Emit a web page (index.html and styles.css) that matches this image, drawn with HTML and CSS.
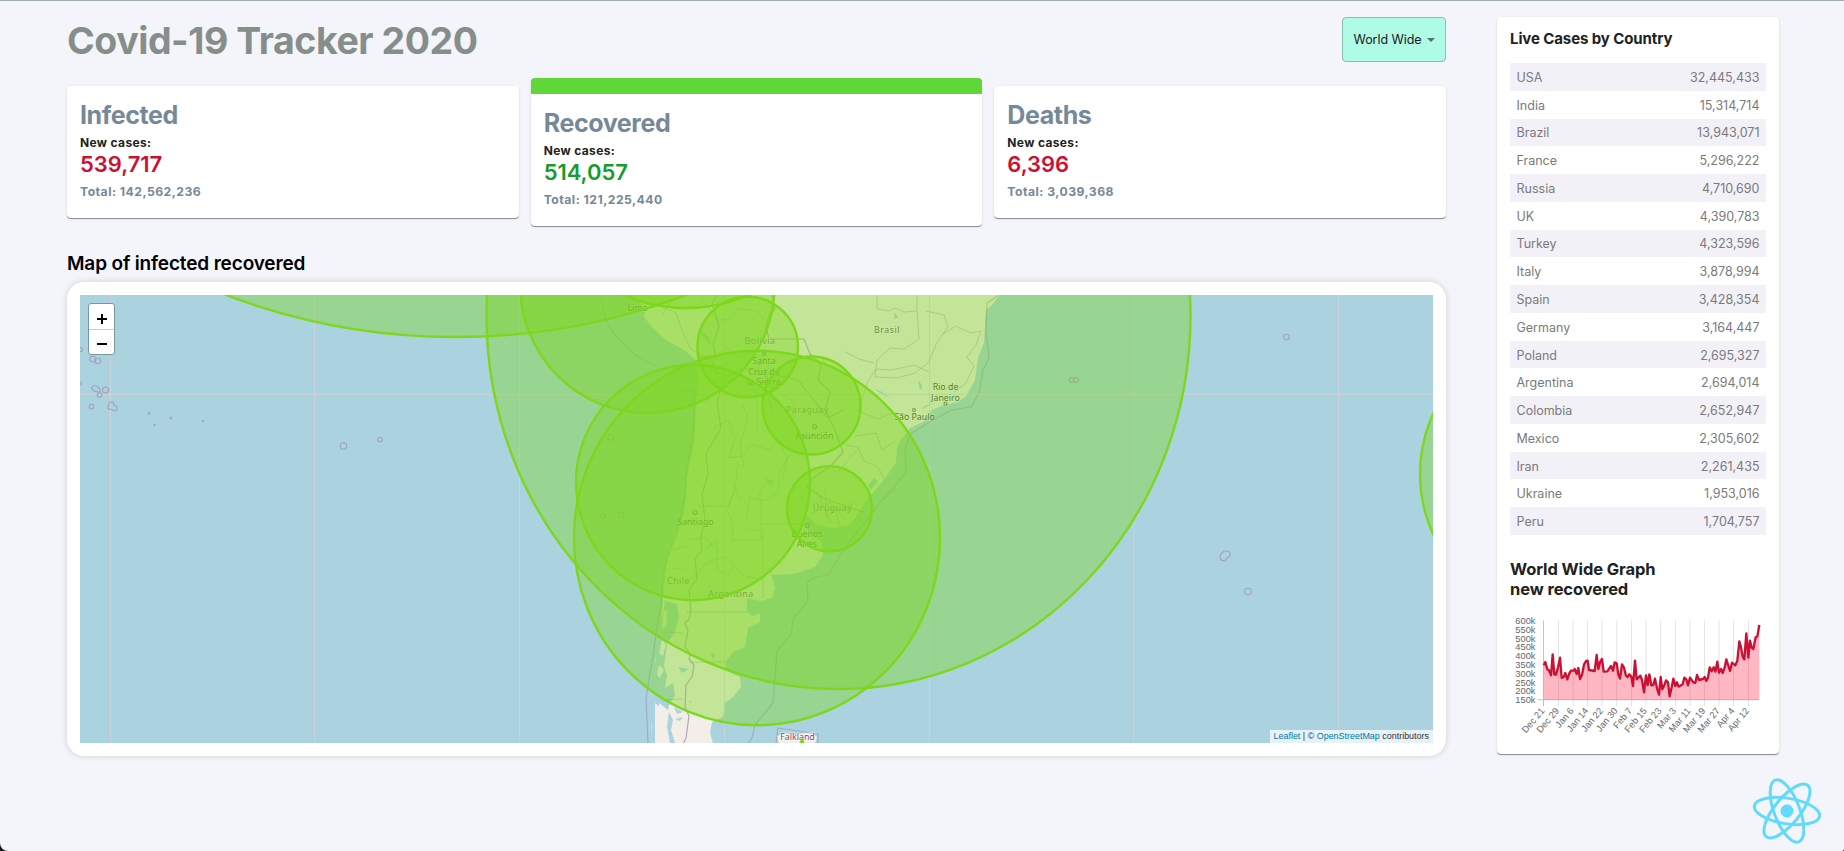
FILE: index.html
```html
<!DOCTYPE html>
<html lang="en">
<head>
<meta charset="utf-8">
<title>Covid-19 Tracker 2020</title>
<link rel="stylesheet" href="styles.css">
</head>
<body>
<div class="app">
  <main class="left">
    <header class="header">
      <h1>Covid-19 Tracker 2020</h1>
      <div class="dropdown"><span>World Wide</span><svg class="caret" width="8" height="4" viewBox="0 0 8 4"><path d="M0 0h8L4 4z"/></svg></div>
    </header>
    <section class="stats">
      <article class="card stat">
        <h2>Infected</h2><h3>New cases:</h3><p class="count red">539,717</p><p class="total">Total: 142,562,236</p>
      </article>
      <article class="card stat selected">
        <h2>Recovered</h2><h3>New cases:</h3><p class="count green">514,057</p><p class="total">Total: 121,225,440</p>
      </article>
      <article class="card stat">
        <h2>Deaths</h2><h3>New cases:</h3><p class="count red">6,396</p><p class="total">Total: 3,039,368</p>
      </article>
    </section>
    <h2 class="map-title"><span>Map of infected recovered</span></h2>
    <section class="map-card">
      <div class="map">
        <svg class="tiles" viewBox="80 295 1353 448" width="1353" height="448">
          <rect class="water" x="80" y="295" width="1353" height="448"/>
          <path class="land" d="M1000 295L990 307 986 310 984 343 978 358 975 380 966 396 958 402 944 405 932 410 923 422 910 428 901 440 897 448 896 462 884 480 869 497 860 510 850 525 833 528 817 525 808 516 803 518 808 530 822 543 823 555 815 567 793 574 773 575 770 570 775 588 772 598 760 601 747 598 747 612 752 616 760 613 760 622 748 628 745 647 733 652 727 660 725 670 740 677 741 687 733 697 725 703 723 717 712 722 710 733 713 743H652L651 694 656 680 655 660 660 645 661 627 663 600 666 567 670 550 677 532 683 517 686 500 687 477 694 443 696 413 698 380 696 360 684 350 666 340 653 328 644 317 645 310 637 300 634 295z"/>
          <!-- fjords, lakes and lagoons -->
          <g class="water">
            <path d="M665 601l12 3 2 14-4 14-8 12-3 22 3 10-2 12 8-5 2 12-8 14-8-6-1 18-8 2-4-8 6-24 2-20 5-32z"/>
            <path d="M652 700l5 10 2 18 2 15h-9zM669 712l4 8-2 10 4 13h-5l-3-16zM674 707l9 5-6 2zM675 719l8-2-3 4zM660 696l10 6-2 8-5-4z"/>
            <path d="M701 330l6 5 5 9-4-1-6-7zM767 479l7 2-2 4-5-1zM874 478l4 3-7 9-3-4zM718 540l-8 7-5 3 5-6zM710 652l5 3-2 4zM678 667l11 2-7 4zM689 700l3 3-2 0zM873 388l9 4 8 6-5-2zM918 380l4 5 0 5-3-3zM895 312l3 6-4 1zM935 402l-10 4-4 4z"/>
          </g>
          <g class="land-islet"><path d="M664 610l3 2-1 14-4 3zM662 640l4 4-3 12-4-3zM659 665l5 5-4 8-3-3zM655 703l7 6 2 12-4 6 4 16h-9zM777 736l8-3 10 2 16-3 6 5-2 6h-36z"/></g>
          <!-- national borders -->
          <g class="border">
            <path d="M772 295l3 14-6 6-3 12 3 12h35l6 15 5 4 6 8-3 14 12 12-5 18 10 20 8 22-12 14-18 12-6 9 16 11 23 8 17 6M698 358l12-2 6 16 12 4 14-8 22 4 8 16 12-4M716 358l-3-14 6-18-7-22 5-9M764 372l34 8 14 18 16 20 15-8M726 372l-9 30 4 26-15 26 2 20-6 20 3 25-4 18 1 13-7 9 2 20-8 11 2 22-2 7-4 4 3 8-3 16 5 7-1 5 5 6-2 12-6 8-1 22 4 9-3 22-3 6 7 7-6 9-4 9 3 12 9 2-2 9 6 9"/>
          </g>
          <!-- territorial waters -->
          <g class="maritime">
            <path d="M999 295l-12 8-1 29 3 26-6 12-4 23-8 14-20 3-18 10-23 14-5 15 1 23-14 18-12 12-20 26-18 24-13 22-18 5-4 4 1 18-15 18-2 16-14 16-2 26-2 26-18 22-3 13-9 12 1 30M648 743l-2-44 3-20 5-28 2-18 5-28 2-32 5-17 9-22 8-40 2-26 7-40 0-36-16-4M776 743l2-15 40 6 0 9M601 295q4 32 18 44 14 18 36 27"/>
          </g>
          <!-- province boundaries -->
          <g class="province">
            <path d="M877 295v14l12 2 6-3 9 4 13-1v-16M917 311l2 28-15 10-14-1-13 12-2 17 22 1 18-5 14-11 8-20 11-15-4-12-18-4M942 335l14-9 15 7 10-2-5 14-9 12 7 9-8 17-12 9M929 372l-15-7-22 5-16-1-8 12-10 30 20 8 14-6 16 2M845 352l14 7 15 4M855 436l21-3 6 17 13-9M859 448l-9 10-12 14M846 445l12 2 6 14 14 6 8 16"/>
            <path d="M646 295l16 12 14 6 7 20 8 16 14 9M672 300l-10 15M702 300l15 20 10 0 12-12 18 3 12 15M722 345l17 12 14-5 16 14M714 428l14-8 7 18-6 20 14-2 9-12 17 6 10-10 8 20-5 20M742 404l6 14-8 26 4 24M760 360l-4 20 12 14 4 18M790 455l-10 15-2 23-14 8-14-4-4 22M738 462l-3 28-8 20 6 14-1 18M700 506h28l6-16M690 540l14-3 10 10M732 540h29v-42M747 530h16v68M717 540v30l12 5 6-13M762 524h42M686 612h61M690 662h39M672 550l14-4M674 568l13 2M687 580l10-4 8-12 20-8 17 19 20 5M812 500l10 8 8-6 14 16M817 492l6 14 8 16M825 490l2 32M809 516l12-8M835 510l5 16M842 508l12-5M664 632l19 1M662 700l20-1M797 405l-12-10M740 500l-8-18M757 500l10-22M757 388v42"/>
          </g>
          <!-- meridians and tropic -->
          <g class="grid"><path d="M110.500 295V743M314.500 295V743M519.500 295V743M724.500 295V743M929.500 295V743M1134 295V743M1338.500 295V743M80 394.500H1433"/></g>
          <g class="islet">
            <circle cx="80.500" cy="349.500" r="2"/><circle cx="92.500" cy="359" r="2.800"/><circle cx="98" cy="361" r="2.800"/>
            <path d="M92 387q3-3 6 0 4 4 1 5-4 0-6-2-2-2-1-3z"/><circle cx="105.500" cy="390" r="3"/><circle cx="99.500" cy="395" r="2.300"/><circle cx="91.500" cy="406.500" r="2.300"/><circle cx="80" cy="383.500" r="1.500"/>
            <path d="M108 406l2-4h3l1 3 3 2v3l-3 1-3-2q-4 1-3-3z"/>
            <circle cx="149" cy="413.500" r=".7"/><circle cx="171" cy="418" r=".9"/><circle cx="154.500" cy="425" r=".6"/><circle cx="203" cy="421" r=".6"/>
            <circle cx="343.500" cy="446" r="3.200"/><circle cx="380" cy="439.500" r="2.300"/>
            <circle cx="610.500" cy="437.500" r="2.800"/><circle cx="603" cy="516" r="2.500"/><circle cx="621" cy="515" r="2.800"/>
            <circle cx="1071.500" cy="380" r="2.400"/><circle cx="1076" cy="380" r="2.400"/><circle cx="1286.500" cy="337" r="2.800"/><circle cx="1248" cy="591.500" r="3.300"/>
            <path d="M1221 554l3-3h3q4 1 3 5l-3 2-2 3-4-1-1-4z"/>
          </g>
          <g class="dots"><circle cx="814.500" cy="426.500" r="2"/><circle cx="695" cy="512.500" r="2"/><circle cx="807" cy="525.500" r="2"/><circle cx="914" cy="410" r="1.500"/><circle cx="945.500" cy="403.500" r="1.500"/><circle cx="764" cy="354" r="1.500"/></g>
          <g class="country">
            <text x="887" y="333">Brasil</text><text x="760" y="344">Bolivia</text><text x="807.500" y="413">Paraguay</text><text x="832.500" y="511">Uruguay</text><text x="678.500" y="584">Chile</text><text x="731" y="597">Argentina</text><text x="797.500" y="739.500" class="falkland">Falkland</text>
          </g>
          <g class="city">
            <text x="637.500" y="311">Lima</text><text x="764" y="364">Santa</text><text x="764" y="374.500">Cruz de</text><text x="764" y="385">la Sierra</text><text x="814.500" y="439">Asunción</text><text x="695.500" y="524.500">Santiago</text><text x="807" y="537">Buenos</text><text x="807" y="547">Aires</text>
            <text x="945.500" y="390">Rio de</text><text x="945.500" y="400.500">Janeiro</text><text x="914.500" y="420">São Paulo</text>
          </g>
          <g class="cases">
            <circle cx="456" cy="-314" r="651"/>
            <ellipse cx="838.500" cy="316" rx="352" ry="373"/>
            <ellipse cx="757" cy="538" rx="183" ry="187.300"/>
            <circle cx="647.500" cy="286" r="127"/>
            <ellipse cx="693" cy="482.500" rx="117" ry="117.700"/>
            <circle cx="686" cy="149" r="159"/>
            <circle cx="747.700" cy="347" r="50.300"/>
            <circle cx="811.500" cy="405.500" r="49"/>
            <circle cx="829.500" cy="508.700" r="42.600"/>
            <circle cx="1565" cy="474" r="145"/>
            <circle cx="802" cy="742" r="1"/>
          </g>
        </svg>
        <div class="zoom">
          <span><svg width="10" height="10" viewBox="0 0 10 10"><path d="M5 0v10M0 5h10"/></svg></span>
          <span><svg width="10" height="10" viewBox="0 0 10 10"><path d="M0 5h10"/></svg></span>
        </div>
        <div class="attribution"><a>Leaflet</a> | © <a>OpenStreetMap</a> contributors</div>
      </div>
    </section>
  </main>
  <aside class="card right">
    <h3 class="list-title">Live Cases by Country</h3>
    <div class="table">
      <div class="row"><span>USA</span><span>32,445,433</span></div>
      <div class="row"><span>India</span><span>15,314,714</span></div>
      <div class="row"><span>Brazil</span><span>13,943,071</span></div>
      <div class="row"><span>France</span><span>5,296,222</span></div>
      <div class="row"><span>Russia</span><span>4,710,690</span></div>
      <div class="row"><span>UK</span><span>4,390,783</span></div>
      <div class="row"><span>Turkey</span><span>4,323,596</span></div>
      <div class="row"><span>Italy</span><span>3,878,994</span></div>
      <div class="row"><span>Spain</span><span>3,428,354</span></div>
      <div class="row"><span>Germany</span><span>3,164,447</span></div>
      <div class="row"><span>Poland</span><span>2,695,327</span></div>
      <div class="row"><span>Argentina</span><span>2,694,014</span></div>
      <div class="row"><span>Colombia</span><span>2,652,947</span></div>
      <div class="row"><span>Mexico</span><span>2,305,602</span></div>
      <div class="row"><span>Iran</span><span>2,261,435</span></div>
      <div class="row"><span>Ukraine</span><span>1,953,016</span></div>
      <div class="row"><span>Peru</span><span>1,704,757</span></div>
    </div>
    <h3 class="graph-title">World Wide Graph<br>new recovered</h3>
    <svg class="chart" viewBox="1510 612 256 130" width="256" height="130">
      <path class="chart-grid" d="M1558.500 620.500V706M1573.100 620.500V706M1587.500 620.500V706M1602 620.500V706M1616.700 620.500V706M1631.500 620.500V706M1646 620.500V706M1660.700 620.500V706M1675.500 620.500V706M1690 620.500V706M1704.500 620.500V706M1719 620.500V706M1733.500 620.500V706M1748.500 620.500V706"/>
      <path class="chart-axis" d="M1543.500 620.500V706M1538 699.700H1759"/>
      <g transform="translate(1530 610) scale(.33333)">
        <path class="area" d="M41 269V166L46 156 52 178 57 181 63 196 68 133 73 194 78 194 84 172 90 143 95 204 101 201 106 189 112 208 118 190 123 182 133 181 134 177 140 192 145 174 150 207 156 195 162 164 168 153 173 152 177 180 194 183 200 135 205 177 211 154 216 147 221 185 232 184 243 168 249 182 254 157 260 160 265 193 270 206 276 163 282 173 288 197 293 201 298 193 304 200 309 228 315 152 320 208 331 197 336 210 342 247 348 196 353 225 358 193 364 226 370 225 375 206 381 235 387 254 392 201 397 238 403 226 408 211 414 217 419 259 425 232 430 206 436 228 441 217 446 230 458 223 463 203 469 208 474 226 480 203 490 217 496 219 501 195 507 210 519 207 524 201 529 213 534 203 539 172 545 184 551 172 556 185 562 155 567 188 573 177 578 189 584 173 589 148 600 183 606 158 616 166 622 152 628 94 633 112 638 140 643 148 649 70 655 143 660 92 665 113 670 117 677 82 682 79 688 45V269Z"/>
        <path class="line" d="M41 166L46 156 52 178 57 181 63 196 68 133 73 194 78 194 84 172 90 143 95 204 101 201 106 189 112 208 118 190 123 182 133 181 134 177 140 192 145 174 150 207 156 195 162 164 168 153 173 152 177 180 194 183 200 135 205 177 211 154 216 147 221 185 232 184 243 168 249 182 254 157 260 160 265 193 270 206 276 163 282 173 288 197 293 201 298 193 304 200 309 228 315 152 320 208 331 197 336 210 342 247 348 196 353 225 358 193 364 226 370 225 375 206 381 235 387 254 392 201 397 238 403 226 408 211 414 217 419 259 425 232 430 206 436 228 441 217 446 230 458 223 463 203 469 208 474 226 480 203 490 217 496 219 501 195 507 210 519 207 524 201 529 213 534 203 539 172 545 184 551 172 556 185 562 155 567 188 573 177 578 189 584 173 589 148 600 183 606 158 616 166 622 152 628 94 633 112 638 140 643 148 649 70 655 143 660 92 665 113 670 117 677 82 682 79 688 45"/>
      </g>
      <g class="ylabels">
        <text x="1535.500" y="624">600k</text><text x="1535.500" y="632.500">550k</text><text x="1535.500" y="641.500">500k</text><text x="1535.500" y="650">450k</text><text x="1535.500" y="659">400k</text><text x="1535.500" y="668">350k</text><text x="1535.500" y="676.500">300k</text><text x="1535.500" y="685.500">250k</text><text x="1535.500" y="694">200k</text><text x="1535.500" y="703">150k</text>
      </g>
      <g class="xlabels">
        <text transform="translate(1545 711) rotate(-50)">Dec 21</text><text transform="translate(1559.600 711) rotate(-50)">Dec 29</text><text transform="translate(1574.200 711) rotate(-50)">Jan 6</text><text transform="translate(1588.900 711) rotate(-50)">Jan 14</text><text transform="translate(1603.500 711) rotate(-50)">Jan 22</text><text transform="translate(1618.100 711) rotate(-50)">Jan 30</text><text transform="translate(1632.700 711) rotate(-50)">Feb 7</text><text transform="translate(1647.300 711) rotate(-50)">Feb 15</text><text transform="translate(1662 711) rotate(-50)">Feb 23</text><text transform="translate(1676.600 711) rotate(-50)">Mar 3</text><text transform="translate(1691.200 711) rotate(-50)">Mar 11</text><text transform="translate(1705.800 711) rotate(-50)">Mar 19</text><text transform="translate(1720.400 711) rotate(-50)">Mar 27</text><text transform="translate(1735 711) rotate(-50)">Apr 4</text><text transform="translate(1749.700 711) rotate(-50)">Apr 12</text>
      </g>
    </svg>
  </aside>
</div>
<footer class="footer">
  <svg class="react" width="74" height="74" viewBox="-37 -37 74 74">
    <g transform="rotate(9)"><circle r="6.500"/><ellipse rx="33" ry="12.800"/><ellipse rx="33" ry="12.800" transform="rotate(60)"/><ellipse rx="33" ry="12.800" transform="rotate(120)"/></g>
  </svg>
</footer>
</body>
</html>
```

FILE: styles.css
```css
* { box-sizing: border-box; margin: 0; padding: 0; }
html { background: #16181a; height: 100%; overflow: hidden; }
body {
  height: 851px;
  overflow: hidden;
  background: #f4f5fa;
  border-top: 1px solid #a3adb0;
  border-radius: 0 0 2px 8px;
  font-family: Inter, "Liberation Sans", sans-serif;
  color: #212121;
}
.app { display: flex; justify-content: space-between; padding: 16px 65px 0 67px; height: 755px; }
.left { width: 1379px; }
.header { display: flex; justify-content: space-between; align-items: center; height: 45px; }
h1 { font-size: 37.500px; font-weight: 700; color: #868e8b; letter-spacing: -.45px; line-height: 45px; padding-top: 2px; }
.dropdown {
  display: flex; align-items: center; justify-content: space-between;
  width: 104px; height: 45px; padding: 0 10px 0 10.500px;
  background: #aefce3; border: 1px solid #86bfae; border-radius: 4px;
  font-size: 12.500px; letter-spacing: -.05px; color: #17211e;
}
.caret { fill: #4f7267; }
.stats { display: flex; gap: 12px; align-items: center; height: 148px; margin-top: 16px; }
.card {
  background: #fff; border-radius: 4px;
  box-shadow: 0 1px 1px -1px rgba(0,0,0,.5), 0 1px 0 rgba(0,0,0,.32), 0 1px 3px rgba(0,0,0,.12);
}
.stat { flex: 1; height: 132px; padding: 13px; }
.selected { height: 148px; border-top: 16px solid #60d639; }
.stat h2 { font-size: 25px; line-height: 30px; margin-top: 1px; font-weight: 700; color: #778899; letter-spacing: -.4px; }
.stat h3 { font-size: 12px; line-height: 16px; margin-top: 5px; font-weight: 700; letter-spacing: .35px; }
.count { font-size: 22px; line-height: 26px; margin-top: 0; font-weight: 600; letter-spacing: -.05px; }
.red { color: #cc1034; }
.green { color: #149d2d; }
.total { font-size: 12.200px; line-height: 16px; margin-top: 7px; font-weight: 700; color: #778899; letter-spacing: .48px; }
.map-title { font-size: 19px; line-height: 24px; font-weight: 600; margin: 26px 0 6px; color: #000; letter-spacing: -.15px; }
.map-card { height: 474px; padding: 13px; border-radius: 17px; background: #fff; box-shadow: 0 0 6px rgba(0,0,0,.16); }
.map { position: relative; width: 1353px; height: 448px; overflow: hidden; }
.tiles { display: block; font-family: "Noto Sans", sans-serif; text-anchor: middle; }
.water { fill: #aad3df; }
.land, .land-islet { fill: #f2efe9; }
.border { fill: none; stroke: #97709a; stroke-width: 1.200; opacity: .6; stroke-linejoin: round; }
.maritime { fill: none; stroke: #8f7fa5; stroke-width: 1.200; opacity: .45; stroke-linejoin: round; }
.province { fill: none; stroke: #a08aa3; stroke-width: .9; opacity: .5; stroke-linejoin: round; }
.grid { fill: none; stroke: #d7d2d5; stroke-width: 1; opacity: .7; }
.islet { fill: none; stroke: #a090b4; stroke-width: 1.100; opacity: .75; }
.dots { fill: none; stroke: #555; stroke-width: 1.100; opacity: .8; }
.country { font-size: 8.800px; fill: #6f5470; letter-spacing: .5px; paint-order: stroke; stroke: rgba(255,255,255,.5); stroke-width: 1.5px; }
.falkland { letter-spacing: 0; }
.city { font-size: 8.800px; fill: #3c3936; paint-order: stroke; stroke: rgba(255,255,255,.5); stroke-width: 1.5px; }
.cases { fill: #7dd71d; fill-opacity: .4; stroke: #7dd71d; stroke-width: 2.400; }
.zoom {
  position: absolute; left: 8px; top: 8px; width: 27px; height: 52px;
  background: #fff; border: 1px solid #7899a3; border-radius: 3px;
  display: flex; flex-direction: column;
}
.zoom span { flex: 1; display: flex; align-items: center; justify-content: center; padding-top: 5px; }
.zoom span + span { border-top: 1px solid #ccc; }
.zoom path { stroke: #000; stroke-width: 2; }
.attribution {
  position: absolute; right: 0; bottom: 0; width: 163px; height: 13px; padding-right: 4px;
  background: rgba(255,255,255,.7); color: #333;
  font: 8.950px/12px "Liberation Sans", Arial, sans-serif; text-align: right; white-space: nowrap;
}
.attribution a { color: #0078a8; }
.right { width: 282px; height: 737px; padding: 13px; }
.list-title { font-size: 15px; line-height: 18px; font-weight: 700; letter-spacing: -.1px; height: 33px; }
.table { height: 472px; display: flex; flex-direction: column; }
.row { flex: 1; display: flex; justify-content: space-between; align-items: center; padding: 1px 6.500px 0; font-size: 12.500px; color: #7a7a7c; }
.row:nth-child(odd) { background: #f2f1f8; }
.graph-title { font-size: 16.500px; line-height: 20px; font-weight: 700; margin-top: 24px; letter-spacing: -.1px; }
.chart { display: block; margin-top: 13px; font-family: "Liberation Sans", Arial, sans-serif; font-size: 9.300px; fill: #666; text-anchor: end; }
.chart-grid { stroke: #e4e4e4; stroke-width: 1; }
.chart-axis { stroke: #c4c4c4; stroke-width: 1; }
.area { fill: #ff0a2f; fill-opacity: .29; }
.line { fill: none; stroke: #cc1034; stroke-width: 7; stroke-linejoin: round; }
.footer { display: flex; justify-content: flex-end; padding: 17.500px 20.500px 0 0; }
.react { fill: none; stroke: #61dafb; stroke-width: 3; }
.react circle { fill: #61dafb; stroke: none; }
```
